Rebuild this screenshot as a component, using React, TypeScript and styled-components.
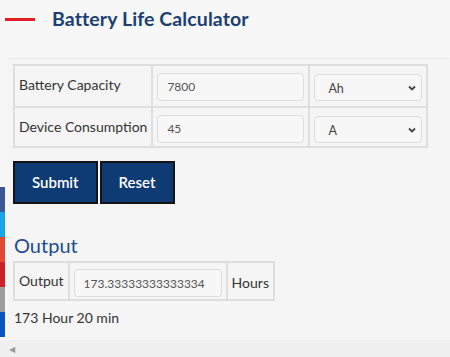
import React from "react";
import styled, { createGlobalStyle } from "styled-components";

const Global = createGlobalStyle`
  html, body { margin: 0; padding: 0; background: #f7f7f7; }
  body { font-family: Lato, "Open Sans", Arial, sans-serif; color: #333; }
  * { box-sizing: border-box; }
`;

const Page = styled.div`
  position: relative;
  width: 450px;
  height: 357px;
  overflow: hidden;
  display: flex;
  flex-direction: column;
  background: #f7f7f7;
`;

const Header = styled.header`
  display: flex;
  align-items: center;
  gap: 17px;
  height: 36px;
  padding: 0 0 0 5px;
`;

const RedLine = styled.span`
  width: 30px;
  height: 3px;
  background: #e41e26;
  margin-top: 2px;
`;

const Title = styled.h1`
  margin: 0;
  font-size: 19.5px;
  font-weight: 700;
  color: #1c3f73;
  letter-spacing: 0.1px;
`;

const Content = styled.main`
  flex: 1;
  margin-top: 22px;
  margin-left: 8px;
  border-top: 1px dotted #e2e2e2;
  background: #f5f5f5;
  padding: 5px 0 0 5px;
`;

const Table = styled.table`
  border: 1px solid #dedede;
  border-spacing: 0;
  border-collapse: separate;
`;

const Cell = styled.td<{ $w?: number; $pb?: number }>`
  border: 1px solid #dedede;
  padding: 6px 4px ${(p) => p.$pb ?? 4}px 4px;
  ${(p) => (p.$w ? `width: ${p.$w}px;` : "")}
  vertical-align: middle;
  font-size: 14px;
  color: #333;
  white-space: nowrap;
`;

const Label = styled.span<{ $dy?: number }>`
  display: block;
  line-height: 18px;
  position: relative;
  top: ${(p) => p.$dy ?? 0}px;
`;

const TextInput = styled.input<{ $w: number }>`
  display: block;
  width: ${(p) => p.$w}px;
  height: 28px;
  border: 1px solid #dcdcdc;
  border-radius: 4px;
  background: #f7f7f7;
  padding: 0 9px;
  font-family: Lato, Arial, sans-serif;
  font-size: 12px;
  color: #555;
  outline: none;
`;

const SelectWrap = styled.div`
  position: relative;
  margin-top: 2px;
  width: 108px;
`;

const Select = styled.select`
  display: block;
  width: 108px;
  height: 27px;
  appearance: none;
  -webkit-appearance: none;
  border: 1px solid #dcdcdc;
  border-radius: 4px;
  background: #f7f7f7;
  padding: 2px 13px 0;
  font-family: Lato, Arial, sans-serif;
  font-size: 12.5px;
  color: #444;
  outline: none;
`;

const Chevron = styled.svg`
  position: absolute;
  right: 6px;
  top: 11px;
  width: 8px;
  height: 6px;
  pointer-events: none;
`;

const Buttons = styled.div`
  display: flex;
  gap: 2px;
  margin-top: 13px;
`;

const Button = styled.button`
  background: #0e3b74;
  color: #fff;
  border: 2px solid #141414;
  padding: 10px 17px;
  font-family: Lato, Arial, sans-serif;
  font-size: 15px;
  font-weight: 600;
  line-height: 19px;
`;

const OutputTitle = styled.h2`
  margin: 29px 0 0 1px;
  font-size: 20px;
  font-weight: 400;
  color: #1e4c8a;
  line-height: 24px;
`;

const OutTable = styled(Table)`
  margin-top: 4px;
`;

const Result = styled.div`
  margin: 8px 0 0 1px;
  font-size: 14px;
  color: #333;
`;

const SocialBar = styled.div`
  position: absolute;
  left: 0;
  top: 187px;
  width: 5px;
  display: flex;
  flex-direction: column;
`;

const SocialItem = styled.span<{ $c: string }>`
  height: 25px;
  background: ${(p) => p.$c};
`;

const ScrollBar = styled.div`
  height: 17px;
  background: #f0f0f0;
  display: flex;
  align-items: center;
  padding-left: 9px;
  color: #9a9a9a;
  font-size: 8px;
`;

const ChevronIcon = () => (
  <Chevron viewBox="0 0 8 6">
    <path d="M1 1.5 L4 4.5 L7 1.5" fill="none" stroke="#444" strokeWidth="1.8" />
  </Chevron>
);

export default function App() {
  const socials = ["#3b5998", "#1aa6e6", "#e04a35", "#cc2127", "#9e9e9e", "#0a56c0"];
  return (
    <Page>
      <Global />
      <Header>
        <RedLine />
        <Title>Battery Life Calculator</Title>
      </Header>
      <Content>
        <Table>
          <tbody>
            <tr>
              <Cell $w={137} $pb={5}>
                <Label $dy={-2}>Battery Capacity</Label>
              </Cell>
              <Cell $w={155} $pb={5}>
                <TextInput $w={147} defaultValue="7800" />
              </Cell>
              <Cell $w={116} $pb={5}>
                <SelectWrap>
                  <Select defaultValue="Ah">
                    <option>Ah</option>
                    <option>mAh</option>
                  </Select>
                  <ChevronIcon />
                </SelectWrap>
              </Cell>
            </tr>
            <tr>
              <Cell $pb={3}>
                <Label $dy={-2}>Device Consumption</Label>
              </Cell>
              <Cell $pb={3}>
                <TextInput $w={147} defaultValue="45" />
              </Cell>
              <Cell $pb={3}>
                <SelectWrap>
                  <Select defaultValue="A">
                    <option>A</option>
                    <option>mA</option>
                  </Select>
                  <ChevronIcon />
                </SelectWrap>
              </Cell>
            </tr>
          </tbody>
        </Table>
        <Buttons>
          <Button>Submit</Button>
          <Button>Reset</Button>
        </Buttons>
        <OutputTitle>Output</OutputTitle>
        <OutTable>
          <tbody>
            <tr>
              <Cell $pb={2}>
                <Label $dy={-2}>Output</Label>
              </Cell>
              <Cell $pb={2}>
                <TextInput $w={148} defaultValue="173.33333333333334" />
              </Cell>
              <Cell $pb={2}>
                <Label>Hours</Label>
              </Cell>
            </tr>
          </tbody>
        </OutTable>
        <Result>173 Hour 20 min</Result>
      </Content>
      <ScrollBar>◀</ScrollBar>
      <SocialBar>
        {socials.map((c) => (
          <SocialItem key={c} $c={c} />
        ))}
      </SocialBar>
    </Page>
  );
}
